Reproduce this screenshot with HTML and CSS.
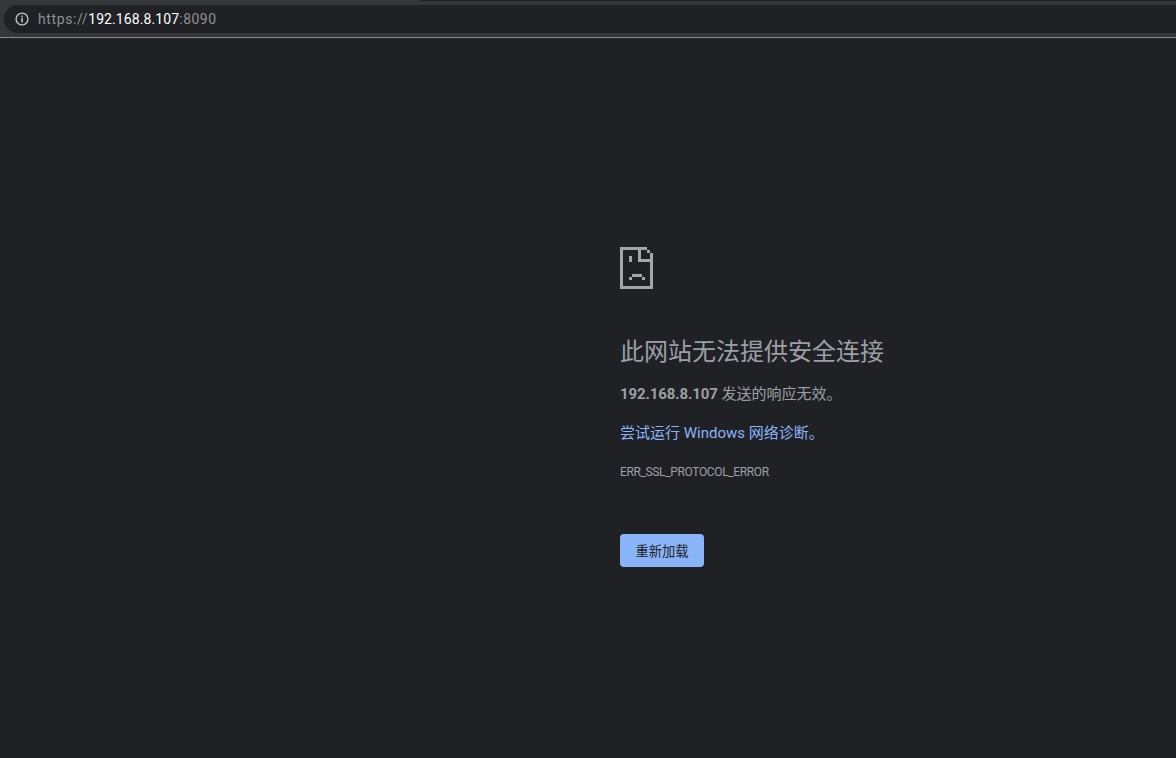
FILE: index.html
```html
<!DOCTYPE html>
<html lang="zh-CN">
<head>
<meta charset="utf-8">
<title>192.168.8.107</title>
<link rel="stylesheet" href="styles.css">
</head>
<body>
<header class="toolbar">
  <div class="tabstrip"><div class="tabedge"></div></div>
  <div class="omnibox">
    <svg class="info" width="14" height="14" viewBox="0 0 14 14" aria-hidden="true">
      <circle cx="7" cy="7" r="5.9" fill="none" stroke="#bdc1c6" stroke-width="1.4"/>
      <rect x="6.2" y="6" width="1.6" height="4.4" fill="#bdc1c6"/>
      <rect x="6.2" y="3.6" width="1.6" height="1.6" fill="#bdc1c6"/>
    </svg>
    <div class="url"><span class="dim scheme">https://</span><span class="host">192.168.8.107</span><span class="dim port">:8090</span></div>
  </div>
  <div class="toolbar-base"></div>
</header>
<main class="page">
  <div class="content">
    <svg class="sad" width="33" height="42" viewBox="0 0 33 42" shape-rendering="crispEdges" aria-hidden="true">
      <path fill="#a6a6a6" d="M0 0H27V3H21V12H30V6H33V42H0ZM3 3V39H30V15H18V3ZM27 3H30V6H27ZM9 9H12V15H9ZM12 27H22V30H12ZM9 30H12V33H9ZM22 30H25V33H22Z" fill-rule="evenodd"/>
    </svg>
    <h1 class="title">此网站无法提供安全连接</h1>
    <p class="summary"><strong>192.168.8.107</strong> 发送的响应无效。</p>
    <p class="suggest"><a class="link" href="#">尝试运行 Windows 网络诊断</a>。</p>
    <div class="code">ERR_SSL_PROTOCOL_ERROR</div>
    <button class="reload" type="button">重新加载</button>
  </div>
</main>
</body>
</html>
```

FILE: styles.css
```css
* { box-sizing: border-box; }
html, body { margin: 0; height: 100%; overflow: hidden; }
body {
  display: flex;
  flex-direction: column;
  background: #202124;
  color: #9aa0a6;
  font-family: Roboto, "Noto Sans CJK SC", sans-serif;
}
.toolbar {
  flex: none;
  height: 38px;
  display: flex;
  flex-direction: column;
  background: #35363a;
  border-bottom: 1px solid #8a8b8d;
}
.tabstrip {
  height: 5px;
  flex: none;
  display: flex;
  justify-content: flex-end;
}
.tabedge {
  width: 756px;
  height: 1px;
  background: #202124;
}
.omnibox {
  height: 28px;
  flex: none;
  margin-left: 4px;
  padding-left: 11px;
  display: flex;
  align-items: center;
  gap: 9px;
  background: #202124;
  border-radius: 14px 0 0 14px;
}
.info { flex: none; }
.url { font-size: 14px; letter-spacing: 0.1px; white-space: nowrap; }
.dim { color: #8d9094; }
.scheme { letter-spacing: 0.6px; }
.port { letter-spacing: 0.5px; }
.host { color: #ffffff; }
.toolbar-base { flex: 1; }
.page {
  flex: 1;
  padding-left: 620px;
}
.content {
  padding-top: 209px;
  display: flex;
  flex-direction: column;
  align-items: flex-start;
}
.sad { display: block; }
.title {
  margin: 45px 0 0;
  font-size: 24px;
  line-height: 36px;
  font-weight: 400;
  color: #9aa0a6;
}
.summary, .suggest {
  margin: 0;
  font-size: 15px;
  line-height: 21px;
}
.summary { margin-top: 14px; }
.summary strong { font-weight: 700; letter-spacing: -0.1px; }
.suggest { margin-top: 18px; color: #8ab4f8; }
.link { color: #8ab4f8; text-decoration: none; }
.code {
  margin-top: 19px;
  font-size: 12px;
  line-height: 18px;
  letter-spacing: -0.36px;
  text-transform: uppercase;
}
.reload {
  margin-top: 53px;
  width: 84px;
  height: 33px;
  padding: 0;
  border: 0;
  border-radius: 4px;
  background: #8ab4f8;
  color: #202124;
  font-family: inherit;
  font-size: 13.3px;
}
```
